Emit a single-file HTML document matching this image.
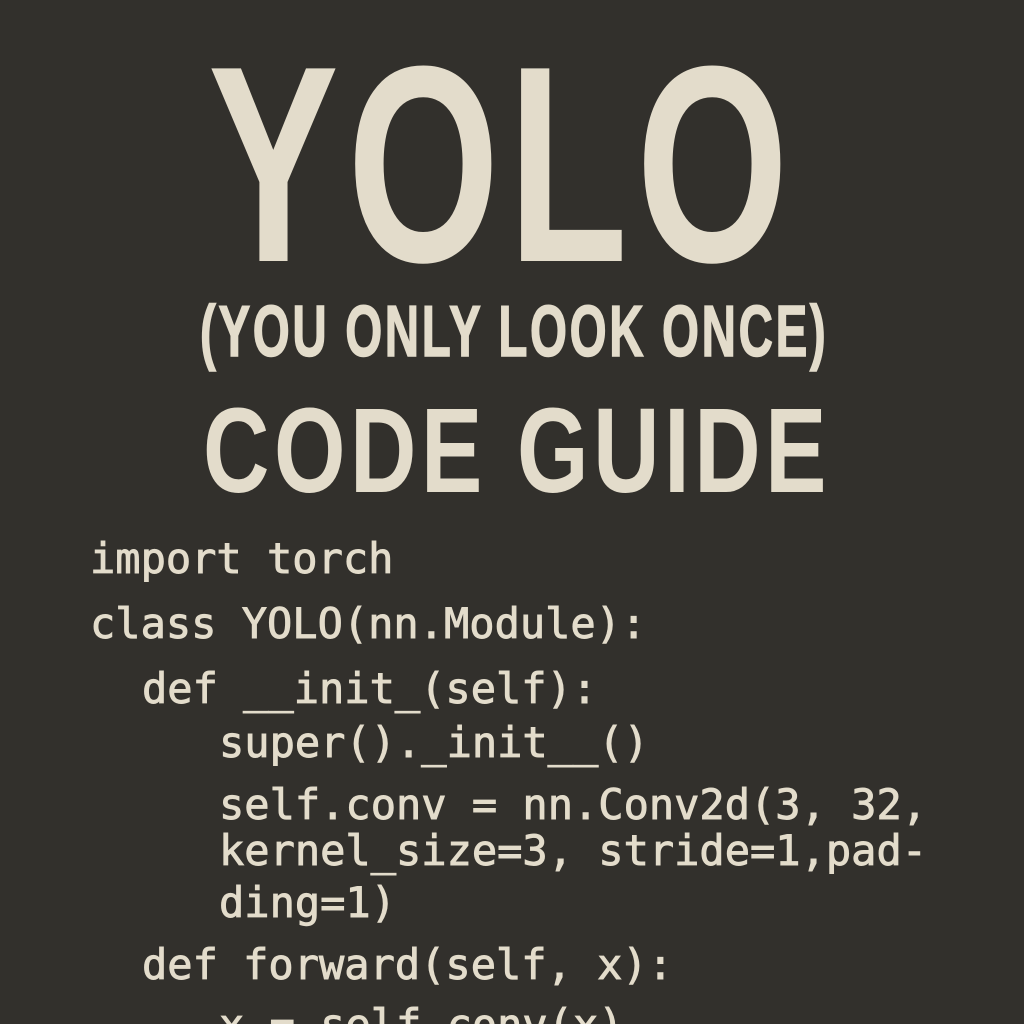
<!DOCTYPE html>
<html><head><meta charset="utf-8"><style>
html,body{margin:0;padding:0;width:1024px;height:1024px;overflow:hidden;}
body{background:#32302c;position:relative;color:#e3dccb;}
.t{position:absolute;font-family:"Liberation Sans",sans-serif;font-weight:bold;line-height:1;white-space:nowrap;transform-origin:0 0;}
.c{position:absolute;font-family:"DejaVu Sans Mono","Liberation Mono",monospace;font-size:42px;line-height:1;white-space:pre;-webkit-text-stroke:0.9px #e3dccb;}
</style></head><body>
<div class="t" style="left:208px;top:25px;font-size:280px;transform:scaleX(0.70);letter-spacing:12px">YOLO</div>
<div class="t" style="left:200px;top:296px;font-size:72px;transform:scaleX(0.66);letter-spacing:4px;-webkit-text-stroke:1.5px #e3dccb">(YOU ONLY LOOK ONCE)</div>
<div class="t" style="left:203px;top:390px;font-size:121px;transform:scaleX(0.76);letter-spacing:6px">CODE GUIDE</div>
<div class="c" style="left:90px;top:538px">import torch</div>
<div class="c" style="left:90px;top:603px">class YOLO(nn.Module):</div>
<div class="c" style="left:142px;top:668px">def __init_(self):</div>
<div class="c" style="left:219px;top:722px">super()._init__()</div>
<div class="c" style="left:219px;top:784px">self.conv = nn.Conv2d(3, 32,</div>
<div class="c" style="left:219px;top:830px">kernel_size=3, stride=1,pad-</div>
<div class="c" style="left:219px;top:882px">ding=1)</div>
<div class="c" style="left:142px;top:944px">def forward(self, x):</div>
<div class="c" style="left:219px;top:1004px">x = self.conv(x)</div>
</body></html>
